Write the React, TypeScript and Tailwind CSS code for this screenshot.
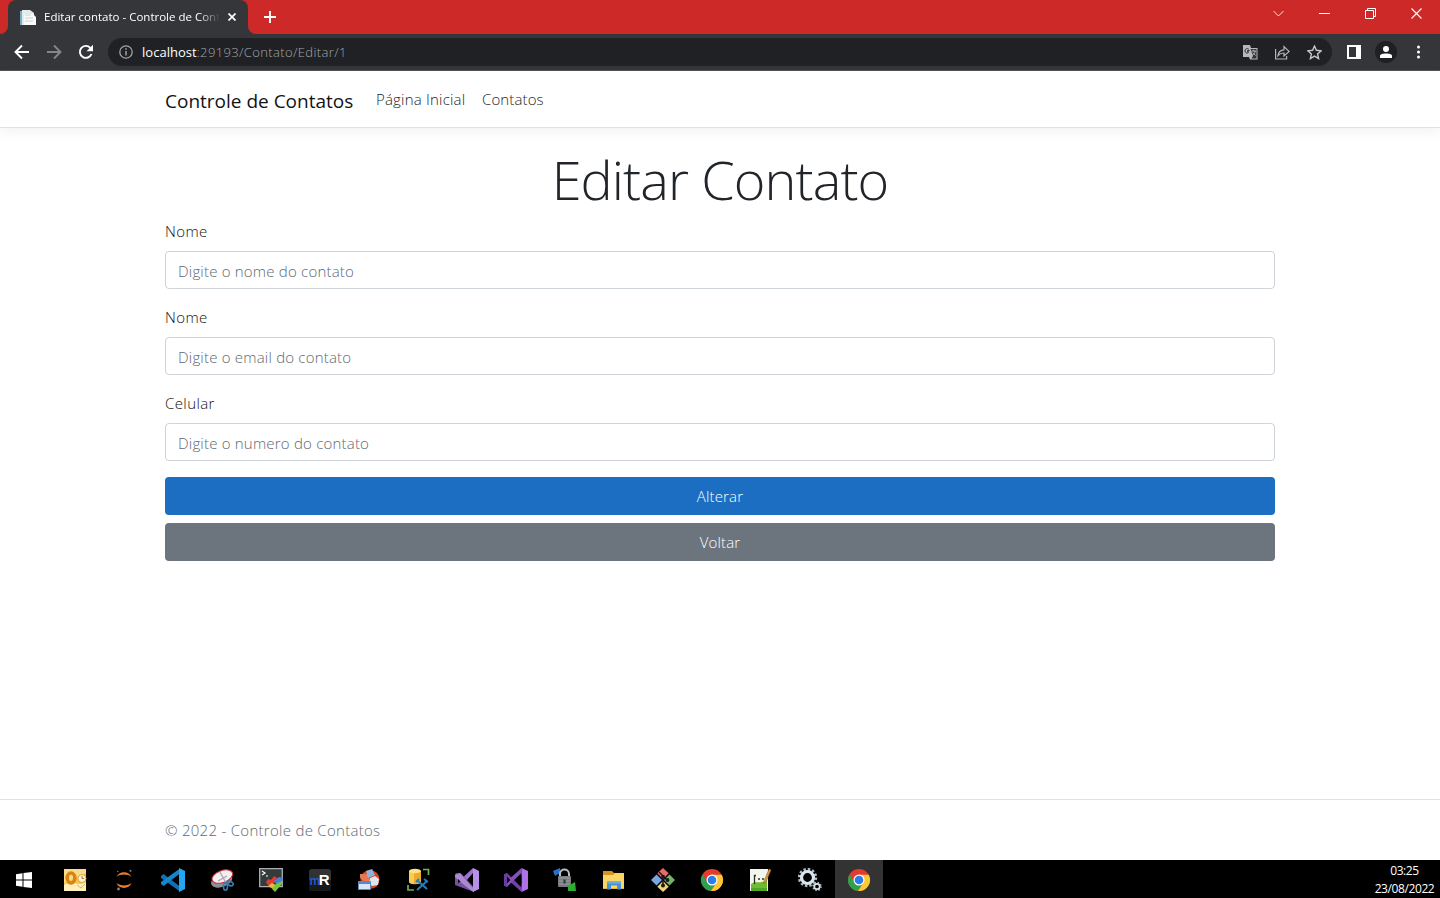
import React from "react";

const Svg = ({ children, className = "size-6", box = "0 0 24 24" }: { children: React.ReactNode; className?: string; box?: string }) => (
  <svg viewBox={box} className={`shrink-0 ${className}`} fill="none">
    {children}
  </svg>
);

const Chrome = () => (
  <Svg>
    <circle cx="12" cy="12" r="11" fill="#e33b2e" />
    <path d="M2.5 6.5A11 11 0 0 0 11 23l5-8.6-8.6 0Z" fill="#2ba24c" />
    <path d="M12 6.8h9.7A11 11 0 0 1 11 23l5.6-8.4Z" fill="#fcc934" />
    <circle cx="12" cy="12" r="5.5" fill="#fff" />
    <circle cx="12" cy="12" r="4.3" fill="#2b7de9" />
  </Svg>
);

const VisualStudio = ({ solid }: { solid?: boolean }) =>
  solid ? (
    <Svg>
      <path d="M0 6.500 3 5 17.500 19.500V24L7 14.500 3 18.800 0 17.500Z" fill="#7440ad" />
      <path d="M0 17.500 3 18.800 17.500 5V0L7 9.500 0 15.500Z" fill="#8650bc" />
      <path d="M0 6.500 3 5v14l-3-1.500Z" fill="#6b3ba3" />
      <path d="m17.500 0 6.500 3v18l-6.500 3Z" fill="#ac72e6" />
      <path d="m3 8.500 3.300 3.500L3 15.500ZM17.500 7v10l-6-5Z" fill="#000" />
    </Svg>
  ) : (
    <Svg>
      <path d="m1 16 5 3L18 5V0Z" fill="#9d75cd" />
      <path d="M0 7c0-1 1-2 2-2l4 .500 13 14V24L0 17Z" fill="#75519f" />
      <path d="M0 7 5 5l13.500 15.500V24L9 17 0 9Z" fill="#a98ad1" />
      <path d="M18 0 24 3V21l-6 3Z" fill="#b990e8" />
      <path d="M3 11v4l2.500-1.500ZM18 8v7l-4-3.500Z" fill="#000" />
    </Svg>
  );

const Windows = () => (
  <Svg className="size-4" box="0 0 16 16">
    <path d="M0 2.200 6.500 1.300V7.500H0ZM7.500 1.100 16 0v7.500H7.500ZM0 8.500h6.500v6.200L0 13.800ZM7.500 8.500H16V16l-8.500-1.100Z" fill="#fff" />
  </Svg>
);

const Outlook = () => (
  <Svg>
    <path d="M1 1h22v22H1Z" fill="#f4c453" />
    <path d="M1 1h22v4L1 15Z" fill="#f8dc8c" />
    <path d="M1 17c8-5 15 2 22-3v9H1Z" fill="#fff0bd" />
    <ellipse cx="8" cy="10" rx="3.800" ry="5" stroke="#d98311" strokeWidth="3.600" />
    <circle cx="19" cy="10.500" r="4" fill="#fff8df" stroke="#e1a42e" />
    <path d="M19 8v2.500h2.200" stroke="#a87328" />
    <path d="m14 17 4 3 4-4" stroke="#e4b14c" />
  </Svg>
);

const Jupyter = () => (
  <Svg>
    <path d="M4.500 9c2.500-6.500 12.500-6.500 15 0-4-3.200-11-3.200-15 0ZM4.500 15c2.500 6.500 12.500 6.500 15 0-4 3.200-11 3.200-15 0Z" fill="#ee7d2b" />
    <circle cx="5.800" cy="3.500" r=".8" fill="#777" />
    <circle cx="18.500" cy="2.800" r="1.100" fill="#777" />
    <circle cx="6.500" cy="21" r="1.400" fill="#858585" />
  </Svg>
);

const VsCode = () => (
  <Svg>
    <path d="m0 8 2.500-2L19 18.500v5L0 10Z" fill="#0f70b5" />
    <path d="m0 16 2.500 2L19 5.500v-5L0 14Z" fill="#1686cc" />
    <path d="m18 0 6 3v18l-6 3Z" fill="#27a4ee" />
    <path d="M18 7v10l-6.500-5Z" fill="#000" />
  </Svg>
);

const Snipping = () => (
  <Svg>
    <ellipse cx="11.500" cy="12.500" rx="11" ry="6.300" fill="#8c8f94" transform="rotate(-20 12 12)" />
    <ellipse cx="12.500" cy="8.700" rx="10.800" ry="6" fill="#f5eef0" stroke="#c72f3c" transform="rotate(-20 12 9)" />
    <path d="m10 4 6 11M8 13l9-5" stroke="#a6a6ac" strokeWidth="1.300" />
    <ellipse cx="15.500" cy="18.500" rx="2" ry="3.700" stroke="#347bb0" strokeWidth="1.700" />
    <ellipse cx="20" cy="15.500" rx="3" ry="2" stroke="#347bb0" strokeWidth="1.700" transform="rotate(25 20 16)" />
  </Svg>
);

const Terminal = () => (
  <Svg>
    <path d="M.7.700h22.600v18H.7Z" fill="#343b3b" stroke="#a9afaf" strokeWidth="1.300" />
    <path d="m3 3 3 2-3 2M7 8h2" stroke="#fff" strokeWidth="1.200" />
    <path d="m7 14 2-3 3 1 3-4 3 2-2 4-5 4-3-2Z" fill="#dc3e35" />
    <path d="m15 13 5-4 4 1-1 4-5 3Z" fill="#4882d9" />
    <path d="m9 18 4-3 4 2-3 4Z" fill="#f2b33a" />
    <path d="m13 21 4-5 6-3v3l-7 8Z" fill="#70c83b" />
  </Svg>
);

const MRemote = () => (
  <Svg>
    <rect x="1" y="1" width="22" height="22" rx="3" fill="#303234" />
    <path d="M1 12h22v8a3 3 0 0 1-3 3H4a3 3 0 0 1-3-3Z" fill="#17191b" />
    <text x="1.500" y="17" fontFamily="Liberation Sans" fontWeight="700" fontSize="12" fill="#2458c5">m</text>
    <text x="10.800" y="17" fontFamily="Liberation Sans" fontWeight="700" fontSize="15" fill="#fff">R</text>
  </Svg>
);

const RemoteManager = () => (
  <Svg>
    <circle cx="13" cy="11.500" r="9.500" fill="#d84420" />
    <path d="M3 6h9v8H8L3 10Z" fill="#e57853" />
    <path d="m9 3 6-2 3 6-7 3Z" fill="#8fb3d8" />
    <path d="m13 10 5-2 4 3-1 6-6 1-3-3Z" fill="#dce6ef" />
    <path d="M1.500 13.500h12v8h-12Z" fill="#d7e7fa" stroke="#6489ba" />
    <path d="M1.500 14h12v2h-12Z" fill="#5c87c3" />
  </Svg>
);

const SqlStudio = () => (
  <Svg>
    <path d="M3 3v11c0 3 12 3 12 0V3Z" fill="#edaa28" />
    <path d="M3 3v11c1 1 3 2 5 2V3Z" fill="#f9cc58" />
    <ellipse cx="9" cy="3" rx="6" ry="2.200" fill="#ffe187" />
    <path d="M17 1.500h5.500V7M2 17v5h6" stroke="#74ae55" strokeWidth="1.700" />
    <path d="m12 13 9 8m-10 1 10-9M10 14l3-3M18 11l4 3" stroke="#287eb9" strokeWidth="2" />
  </Svg>
);

const SecureLink = () => (
  <Svg>
    <path d="M0 3 7 0l1 7-3-1-3 2Z" fill="#2472ce" />
    <path d="M7 9V6c0-6 9-6 9 0v3" stroke="#b8bcbc" strokeWidth="2" />
    <rect x="5" y="8" width="13" height="11" rx="1" fill="#777b7d" />
    <path d="M6 10h11M6 13h11M6 16h11" stroke="#9ca0a1" />
    <path d="M10.500 11.500h2v4h-2Z" fill="#303334" />
    <path d="m15 18 7-4 1 9h-8Z" fill="#2caf31" />
  </Svg>
);

const Explorer = () => (
  <Svg>
    <path d="M1 4V3h9l2 2h10v16H1Z" fill="#d5941f" />
    <path d="M1 7h10l2-2h9v15.500H1Z" fill="#fbd466" />
    <path d="M5 13.500h14v8h-4v-4H9v4H5Z" fill="#4696ce" />
    <path d="M5 13.500h14v2H5Z" fill="#68aede" />
  </Svg>
);

const Git = () => (
  <Svg>
    <path d="m12 0 5.700 5.300L12 11 6.300 5.300Z" fill="#eb6865" />
    <path d="m5.500 6.500 5.500 5.500-5.500 5.500L0 12Z" fill="#77a6e6" />
    <path d="m18.500 6.500 5.500 5.500-5.500 5.500L13 12Z" fill="#75b36c" />
    <path d="m12 13 5.700 5.700L12 24l-5.700-5.300Z" fill="#f3d375" />
    <path d="m8 4 8 8m-4-4v10" stroke="#191919" strokeWidth="1.500" />
    <circle cx="12" cy="8.500" r="1.800" fill="#191919" /><circle cx="16.500" cy="12" r="1.900" fill="#191919" /><circle cx="12" cy="17.500" r="2" fill="#191919" />
  </Svg>
);

const Notes = () => (
  <Svg>
    <path d="M1 1h18v22H1Z" fill="#f2f6ed" />
    <path d="M2 16c6-4 10 1 16-5v12H2Z" fill="#70bb32" />
    <path d="M2 20h16v3H2Z" fill="#50a725" />
    <path d="M5.500 7v9M5 7.500h2M9 11h2m2 0h2" stroke="#293126" strokeWidth="1.300" />
    <path d="m15 13 5-12 2 1-5 12-2 2Z" fill="#db9b3b" stroke="#7d602c" strokeWidth=".5" />
  </Svg>
);

const Gears = () => (
  <Svg>
    <circle cx="9.500" cy="9.500" r="8.200" stroke="#a9bac6" strokeWidth="3" strokeDasharray="2.400 1.894" />
    <circle cx="9.500" cy="9.500" r="6" stroke="#dbe5ec" strokeWidth="3.200" />
    <circle cx="19" cy="18.500" r="3.800" stroke="#97abb9" strokeWidth="2" strokeDasharray="1.500 1.484" />
    <circle cx="19" cy="18.500" r="2.700" stroke="#d9e4eb" strokeWidth="1.700" />
  </Svg>
);

const taskbarIcons = [
  Outlook, Jupyter, VsCode, Snipping, Terminal, MRemote, RemoteManager, SqlStudio,
  () => <VisualStudio />, () => <VisualStudio solid />, SecureLink, Explorer, Git, Chrome, Notes, Gears, Chrome,
];

const TitleBar = () => (
  <div className="flex h-[34px] shrink-0 bg-[#ce2929]">
    <div className="flex w-2 items-end bg-[#353639]"><div className="h-[34px] w-2 rounded-br-lg bg-[#ce2929]" /></div>
    <div className="flex w-60 items-center rounded-t-lg bg-[#353639]">
      <Svg className="ml-3 mt-px size-4" box="0 0 16 16">
        <path d="M0 1h4v14H0Z" fill="#77aeca" /><path d="M2 0h8l4 3v12H2Z" fill="#e4e9e9" />
        <path d="M4 4h9l3 3v8H4Z" fill="#fafafa" /><path d="M5 5h6M5 8h8M5 11h8" stroke="#cbd2d2" />
      </Svg>
      <span className="ml-2 w-[176px] overflow-hidden whitespace-nowrap text-[11.500px] leading-4 tracking-[0px] text-white [mask-image:linear-gradient(to_right,black_88%,transparent)]">
        Editar contato - Controle de Cont
      </span>
      <Svg className="ml-2 size-2" box="0 0 8 8"><path d="m.5.500 7 7m0-7-7 7" stroke="#fff" strokeWidth="1.700" /></Svg>
    </div>
    <div className="w-2 bg-[#353639]"><div className="h-[34px] w-2 rounded-bl-lg bg-[#ce2929]" /></div>
    <Svg className="ml-2 mt-[11px] size-3" box="0 0 12 12"><path d="M6 0v12M0 6h12" stroke="#fff" strokeWidth="1.900" /></Svg>
    <div className="ml-auto flex h-7 [&>div]:flex [&>div]:w-[46px] [&>div]:items-center [&>div]:justify-center [&>div]:pr-px [&>div]:pb-px">
      <div><Svg className="size-[11px]" box="0 0 11 11"><path d="m.5 3 5 5 5-5" stroke="#fbe0e0" /></Svg></div>
      <div><Svg className="size-[11px]" box="0 0 11 11"><path d="M0 5.500h11" stroke="#fff" /></Svg></div>
      <div><Svg className="size-[11px]" box="0 0 11 11"><path d="M.5 2.500h8v8h-8ZM2.500 2.500v-2h8v8h-2" stroke="#fff" /></Svg></div>
      <div><Svg className="size-[11px]" box="0 0 11 11"><path d="m.5.500 10 10m0-10-10 10" stroke="#fff" strokeWidth="1.100" /></Svg></div>
    </div>
  </div>
);

const Toolbar = () => (
  <div className="flex h-[37px] shrink-0 items-center border-b border-[#535457] bg-[#353639]">
    <div className="flex gap-4 pl-[14px]">
      <Svg className="size-4" box="0 0 16 16"><path d="M15 8H2M8 1.500 1.500 8 8 14.500" stroke="#fff" strokeWidth="1.900" /></Svg>
      <Svg className="size-4" box="0 0 16 16"><path d="M1 8h13M8 1.500 14.500 8 8 14.500" stroke="#85868a" strokeWidth="1.900" /></Svg>
      <Svg className="size-4" box="0 0 16 16"><path d="M13.500 10A6 6 0 1 1 12.300 3.800L14 5.500" stroke="#fff" strokeWidth="1.900" /><path d="M15 .7v6.500H8.500Z" fill="#fff" /></Svg>
    </div>
    <div className="ml-[14px] flex h-7 w-[1224px] items-center rounded-full bg-[#202124] pl-[11px] pr-[10px]">
      <Svg className="size-[14px]" box="0 0 14 14"><circle cx="7" cy="7" r="6.200" stroke="#a0a3a8" strokeWidth="1.300" /><path d="M7 6v4.500M7 3.300v1.500" stroke="#a0a3a8" strokeWidth="1.500" /></Svg>
      <span className="ml-[9px] mt-px whitespace-nowrap text-[13px] tracking-[0.02px] text-[#a4a6aa]"><span className="text-white">localhost</span><span className="font-light tracking-[0.37px]">:29193/Contato/Editar/1</span></span>
      <div className="ml-auto flex items-center gap-[17px]">
        <Svg className="size-[15px]" box="0 0 15 15">
          <path d="M0 0h7l1 3h6.500v11.500H7L6 12H0Z" fill="#b6b8bc" /><path d="M7.500 4h6v9.500H8.500L10 11Z" fill="#303135" />
          <path d="M6.500 5.500h-2v1.300h1.200c-.4 2-3.700 1.500-3.700-.8 0-2.500 2.500-3 3.800-1.700" stroke="#303135" />
          <path d="M8.500 6h4.500M10.700 4.700V6m1.500 0c0 2-1.500 3.300-3 4m.7-2.500 2.600 3" stroke="#b6b8bc" />
        </Svg>
        <Svg className="size-[15px]" box="0 0 15 15"><path d="M.6 4v10h11v-3" stroke="#b3b5b8" strokeWidth="1.200" /><path d="M3 10.500c.5-4 2.500-5.500 6-5.700V1.600l5.200 4.900L9 11V8c-3 0-4.500.7-6 2.500Z" stroke="#b3b5b8" strokeWidth="1.200" /></Svg>
        <Svg className="size-[15px]" box="0 0 15 15"><path d="m7.500 1 1.900 4.300 4.700.5-3.500 3.100 1 4.600-4.100-2.400-4.100 2.400 1-4.600L.9 5.800l4.700-.5Z" stroke="#c4c6ca" strokeWidth="1.400" /></Svg>
      </div>
    </div>
    <Svg className="ml-[15px] size-[14px]" box="0 0 14 14"><path d="M0 0h14v14H0Z" fill="#fff" /><path d="M2 2h7v10H2Z" fill="#35363a" /></Svg>
    <div className="ml-[14px] flex size-[22px] items-center justify-center rounded-full bg-[#1f2023]">
      <Svg className="size-3" box="0 0 12 12"><circle cx="6" cy="3" r="3" fill="#fff" /><path d="M0 12V9.800C0 6.700 12 6.700 12 9.800V12Z" fill="#fff" /></Svg>
    </div>
    <Svg className="ml-[14px] size-[14px]" box="0 0 14 14"><circle cx="7.500" cy="2" r="1.500" fill="#fff" /><circle cx="7.500" cy="7" r="1.500" fill="#fff" /><circle cx="7.500" cy="12" r="1.500" fill="#fff" /></Svg>
  </div>
);

const Field = ({ label, placeholder }: { label: string; placeholder: string }) => (
  <div className="mb-4">
    <label className="mb-2 block h-6 text-[15px] font-light leading-6 tracking-[0.4px] text-[#101214]">{label}</label>
    <input
      placeholder={placeholder}
      className="block h-[38px] w-full rounded border border-[#ced4da] bg-white px-3 pt-[2px] text-[15px] font-light tracking-[0.2px] placeholder:text-[#606970]"
    />
  </div>
);

export default function App() {
  return (
    <div className="flex h-[898px] w-[1440px] flex-col overflow-hidden bg-white font-['Open_Sans','Noto_Sans',sans-serif] text-[#212529]">
      <TitleBar />
      <Toolbar />
      <header className="h-[57px] shrink-0 border-b border-[#dee2e6] shadow-[0_4px_12px_rgba(0,0,0,0.05)]">
        <nav className="mx-auto flex h-full w-[1110px] items-center text-[15px] font-light">
          <span className="mt-[4px] w-[211px] whitespace-nowrap text-[19px] font-normal text-[#111315]">Controle de Contatos</span>
          <span className="w-[106px] whitespace-nowrap tracking-[0.2px]">Página Inicial</span>
          <span className="whitespace-nowrap tracking-[0.12px]">Contatos</span>
        </nav>
      </header>
      <main className="mx-auto w-[1110px] grow pt-4">
        <h1 className="mb-2 h-[67px] whitespace-nowrap text-center text-[54px] font-light leading-[70px] tracking-[-0.9px]">Editar Contato</h1>
        <form>
          <Field label="Nome" placeholder="Digite o nome do contato" />
          <Field label="Nome" placeholder="Digite o email do contato" />
          <Field label="Celular" placeholder="Digite o numero do contato" />
          <button type="button" className="mb-2 block h-[38px] w-full rounded bg-[#1b6ec2] pt-px text-[15px] font-light tracking-[0.15px] text-white">Alterar</button>
          <button type="button" className="block h-[38px] w-full rounded bg-[#6c757d] pt-px text-[15px] font-light tracking-[0.15px] text-white">Voltar</button>
        </form>
      </main>
      <footer className="h-[61px] shrink-0 border-t border-[#dee2e6]">
        <div className="mx-auto w-[1110px] text-[15px] font-light leading-[60px] tracking-[0.28px] text-[#606970]">© 2022 - Controle de Contatos</div>
      </footer>
      <div className="flex h-[38px] shrink-0 bg-black">
        <div className="flex w-[51px] items-center pl-4 pt-px"><Windows /></div>
        <div className="flex gap-px">
          {taskbarIcons.map((Icon, i) => (
            <div key={i} className={`flex w-12 items-center justify-center pt-[2px] pr-px ${i === 16 ? "bg-[#333333]" : ""}`}><Icon /></div>
          ))}
        </div>
        <div className="ml-auto flex w-[71px] flex-col items-center pt-[2px] text-[12px] leading-[18px] tracking-[-0.4px] text-white">
          <span>03:25</span><span>23/08/2022</span>
        </div>
      </div>
    </div>
  );
}
